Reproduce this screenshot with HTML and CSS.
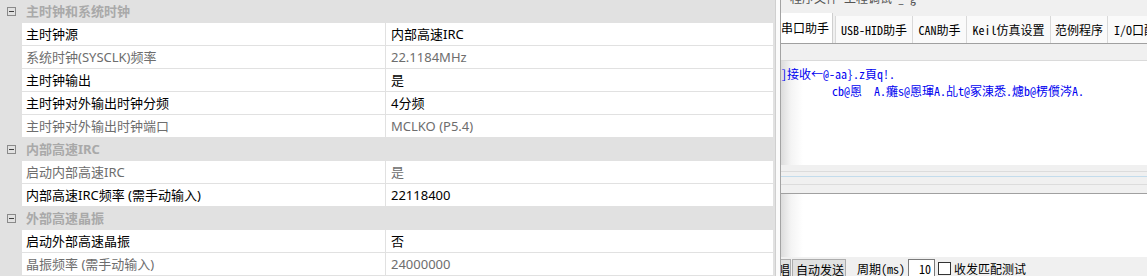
FILE: index.html
```html
<!DOCTYPE html>
<html lang="zh-CN">
<head>
<meta charset="utf-8">
<link rel="stylesheet" href="styles.css">
</head>
<body>
<div class="screen">
  <div class="pg">
    <div class="cat first">
      <svg class="tog" width="9" height="9" viewBox="0 0 9 9"><rect x="0.5" y="0.5" width="8" height="8" fill="none" stroke="#8a8a8a"/><path d="M2 4.5h5" stroke="#404040"/></svg>
      <span class="cat-label">主时钟和系统时钟</span>
    </div>
    <div class="row"><div class="name">主时钟源</div><div class="val">内部高速IRC</div></div>
    <div class="row ro"><div class="name">系统时钟(SYSCLK)频率</div><div class="val">22.1184MHz</div></div>
    <div class="row"><div class="name">主时钟输出</div><div class="val">是</div></div>
    <div class="row"><div class="name">主时钟对外输出时钟分频</div><div class="val">4分频</div></div>
    <div class="row ro"><div class="name">主时钟对外输出时钟端口</div><div class="val">MCLKO (P5.4)</div></div>
    <div class="cat">
      <svg class="tog" width="9" height="9" viewBox="0 0 9 9"><rect x="0.5" y="0.5" width="8" height="8" fill="none" stroke="#8a8a8a"/><path d="M2 4.5h5" stroke="#404040"/></svg>
      <span class="cat-label">内部高速IRC</span>
    </div>
    <div class="row ro"><div class="name">启动内部高速IRC</div><div class="val">是</div></div>
    <div class="row"><div class="name">内部高速IRC频率 (需手动输入)</div><div class="val">22118400</div></div>
    <div class="cat">
      <svg class="tog" width="9" height="9" viewBox="0 0 9 9"><rect x="0.5" y="0.5" width="8" height="8" fill="none" stroke="#8a8a8a"/><path d="M2 4.5h5" stroke="#404040"/></svg>
      <span class="cat-label">外部高速晶振</span>
    </div>
    <div class="row"><div class="name">启动外部高速晶振</div><div class="val">否</div></div>
    <div class="row ro"><div class="name">晶振频率 (需手动输入)</div><div class="val">24000000</div></div>
  </div>
  <div class="frame"></div>
  <div class="win">
    <div class="win-top"><span class="top-cut">程序文件 工程调试 _ g</span></div>
    <div class="tabs">
      <div class="tab sel t1">串口助手</div>
      <div class="tab t2">USB-HID助手</div>
      <div class="tab t3">CAN助手</div>
      <div class="tab t4">Keil仿真设置</div>
      <div class="tab t5">范例程序</div>
      <div class="tab t6">I/O口配置</div>
    </div>
    <div class="band"></div>
    <div class="recv">
      <div class="rline">]接收←@-aa}.z頁q!.</div>
      <div class="rline indent">cb@慁  A.癱s@慁琿A.乩t@冢涷悉.爈b@楞儨涔A.</div>
    </div>
    <div class="split"><div class="sp1"></div><div class="sp2"></div><div class="sp3"></div></div>
    <div class="send"></div>
    <div class="toolbar">
      <div class="btn cut"><span>唱</span></div>
      <div class="btn auto">自动发送</div>
      <span class="lbl">周期(ms)</span>
      <div class="num">10</div>
      <div class="chk"></div>
      <span class="lbl2">收发匹配测试</span>
    </div>
  </div>
</div>
</body>
</html>
```
FILE: styles.css
```css
html, body {
  margin: 0;
  padding: 0;
}
body {
  width: 1147px;
  height: 276px;
  overflow: hidden;
  background: #f0f0f0;
}
.screen {
  display: flex;
  width: 1147px;
  height: 276px;
  overflow: hidden;
}
.pg {
  width: 773px;
  flex: none;
  background: #e1e1e1;
  border-right: 2px solid #e1e1e1;
  font-family: "Noto Sans", "Noto Sans CJK SC", sans-serif;
  font-size: 13px;
  color: #000;
}
.cat {
  height: 23px;
  display: flex;
  align-items: center;
  box-sizing: border-box;
}
.tog {
  margin-left: 7px;
  flex: none;
}
.cat-label {
  margin-left: 10px;
  font-weight: bold;
  color: #a9a9a9;
  line-height: 23px;
}
.row {
  margin-left: 22px;
  height: 23px;
  box-sizing: border-box;
  border-bottom: 1px solid #e1e1e1;
  background: #fff;
  display: flex;
}
.name {
  width: 364px;
  box-sizing: border-box;
  padding-left: 4px;
  border-right: 1px solid #e1e1e1;
  line-height: 22px;
  white-space: nowrap;
}
.val {
  flex: 1;
  padding-left: 5px;
  line-height: 22px;
  white-space: nowrap;
}
.ro .name, .ro .val {
  color: #6d6d6d;
}
.frame {
  flex: none;
  width: 4px;
  border-left: 1px solid #cfcfcf;
  border-right: 1px solid #a3a3a3;
  background: #fbfbfb;
}
.win {
  flex: 1;
  min-width: 0;
  display: flex;
  flex-direction: column;
  background: #f0f0f0;
  font-family: "Noto Sans Mono CJK SC", "Liberation Mono", "Noto Sans CJK SC", monospace;
  font-size: 12px;
  color: #000;
  overflow: hidden;
}
.win-top {
  height: 13px;
  flex: none;
  overflow: hidden;
  display: flex;
  align-items: flex-start;
}
.top-cut {
  margin-left: 9px;
  margin-top: -9px;
  color: #555;
  line-height: 14px;
  white-space: nowrap;
}
.tabs {
  height: 31px;
  flex: none;
  display: flex;
  align-items: flex-end;
  box-sizing: border-box;
  border-bottom: 1px solid #a0a0a0;
  white-space: nowrap;
}
.tab {
  height: 27px;
  box-sizing: border-box;
  display: flex;
  align-items: center;
  justify-content: center;
  background: #fafafa;
  border-right: 1px solid #d9d9d9;
  flex: none;
}
.tab.sel {
  height: 30px;
  background: #fff;
  justify-content: flex-start;
  border-right: 1px solid #cfcfcf;
  margin-right: 2px;
  padding-bottom: 1px;
}
.t1 { width: 52px; }
.t2 { width: 78px; border-left: 1px solid #d9d9d9; }
.t3 { width: 54px; }
.t4 { width: 84px; }
.t5 { width: 57px; }
.t6 { width: 70px; justify-content: flex-start; padding-left: 6px; }
.band {
  height: 16px;
  flex: none;
  background: #f0f0f0;
  border-bottom: 1px solid #dadada;
}
.recv {
  height: 104px;
  flex: none;
  background: linear-gradient(to right, #dcdcdc 0, #f4f4f4 10px, #fff 22px);
  color: #0000f0;
  padding-top: 4px;
  box-sizing: border-box;
}
.rline {
  height: 17px;
  line-height: 17px;
  white-space: pre;
}
.indent {
  padding-left: 51px;
}
.split {
  height: 28px;
  flex: none;
  background: #f0f0f0;
  display: flex;
  flex-direction: column;
}
.sp1 {
  height: 6px;
  border-bottom: 1px solid #dcdcdc;
}
.sp2 {
  height: 4px;
  border-bottom: 1px solid #c3dcec;
}
.sp3 {
  height: 7px;
  border-bottom: 1px solid #dcdcdc;
}
.send {
  height: 64px;
  flex: none;
  box-sizing: border-box;
  border-top: 1px solid #a0a0a0;
  background: linear-gradient(to right, #dcdcdc 0, #f4f4f4 10px, #fff 22px);
}
.toolbar {
  flex: 1;
  display: flex;
  align-items: flex-start;
  padding-top: 2px;
  white-space: nowrap;
}
.btn {
  height: 20px;
  box-sizing: border-box;
  border: 1px solid #adadad;
  background: #e1e1e1;
  display: flex;
  align-items: center;
}
.cut {
  width: 10px;
  border-left: none;
  overflow: hidden;
  justify-content: flex-end;
}
.cut span {
  flex: none;
}
.auto {
  margin-left: 1px;
  width: 54px;
  padding-left: 3px;
}
.lbl {
  margin-left: 11px;
  line-height: 20px;
}
.num {
  margin-left: 3px;
  width: 27px;
  height: 19px;
  box-sizing: border-box;
  border: 1px solid #7a7a7a;
  background: #fff;
  text-align: right;
  padding-right: 3px;
  line-height: 17px;
}
.chk {
  margin-left: 3px;
  margin-top: 3px;
  width: 13px;
  height: 13px;
  box-sizing: border-box;
  border: 1px solid #333;
  background: #fff;
}
.lbl2 {
  margin-left: 3px;
  line-height: 20px;
}
```
